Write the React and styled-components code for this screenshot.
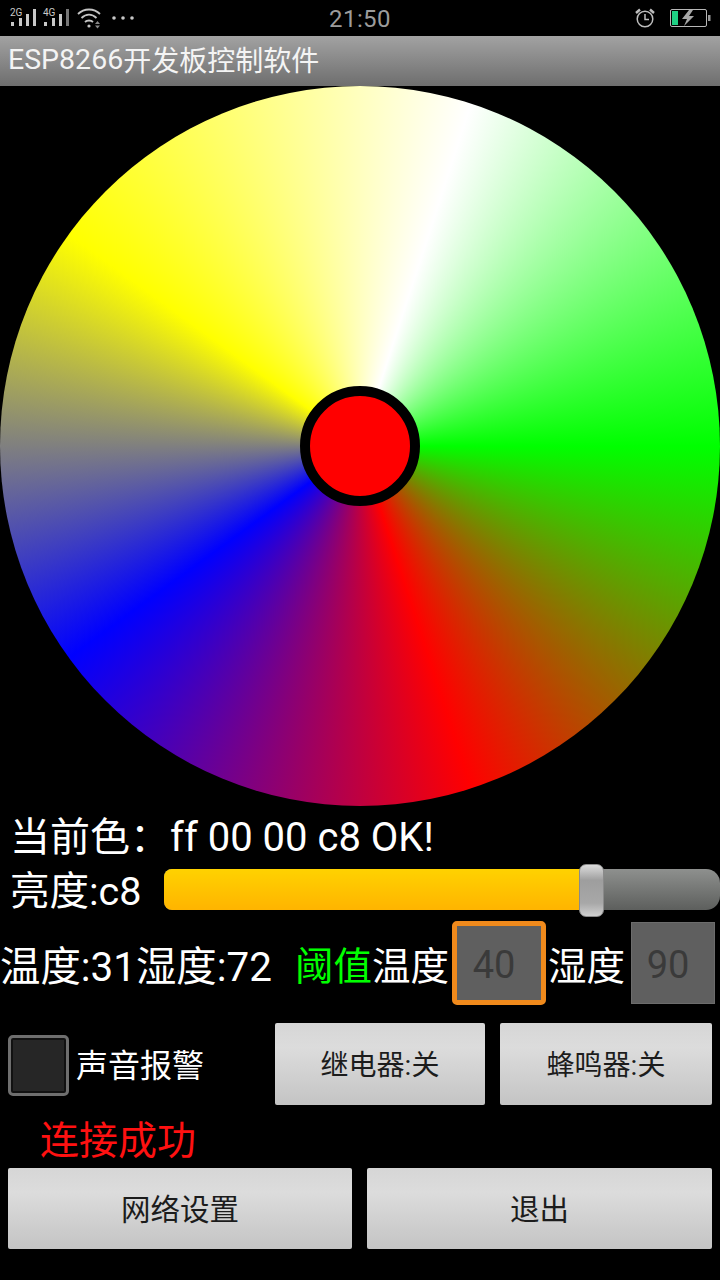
import React from "react";
import styled, { createGlobalStyle } from "styled-components";

const Global = createGlobalStyle`
  html, body { margin: 0; padding: 0; background: #000; }
  * { box-sizing: border-box; }
  body { font-family: Roboto, "Noto Sans CJK SC", sans-serif; color: #fff; }
`;

const Page = styled.div`
  width: 720px;
  height: 1280px;
  background: #000;
  overflow: hidden;
`;

const StatusBar = styled.div`
  height: 36px;
  padding: 0 9px 0 9px;
  display: grid;
  grid-template-columns: 1fr auto 1fr;
  align-items: center;
  color: #a8a8a8;
`;
const StatusLeft = styled.div`
  display: flex;
  align-items: center;
`;
const StatusRight = styled.div`
  display: flex;
  align-items: center;
  justify-content: flex-end;
`;
const Spacer = styled.span`
  width: ${(p) => p.$w}px;
  flex: none;
`;
const Clock = styled.span`
  font-size: 24px;
  padding-top: 2px;
  letter-spacing: 0.4px;
  color: #9c9c9c;
`;

const TitleBar = styled.div`
  height: 50px;
  padding: 0 0 4px 8px;
  display: flex;
  align-items: center;
  font-size: 28px;
  color: #f4f4f4;
  background: linear-gradient(#a2a2a2, #6e6e6e);
`;
const TitleLatin = styled.span`
  font-size: 28.5px;
`;

const Wheel = styled.div`
  width: 720px;
  height: 720px;
  border-radius: 50%;
  display: flex;
  align-items: center;
  justify-content: center;
  background: conic-gradient(
    from 18deg,
    #fff 0deg,
    #0f0 72deg,
    #f00 144deg,
    #00f 216deg,
    #ff0 288deg,
    #fff 360deg
  );
`;
const Picked = styled.div`
  width: 120px;
  height: 120px;
  border-radius: 50%;
  border: 10px solid #000;
  background: ${(p) => p.color};
`;

const ColorLine = styled.div`
  height: 56px;
  padding-left: 10px;
  display: flex;
  align-items: center;
  font-size: 40px;
  white-space: pre;
`;

const BrightRow = styled.div`
  height: 50px;
  padding-left: 10px;
  display: flex;
  align-items: center;
  font-size: 39.5px;
`;
const BrightLabel = styled.span`
  width: 154px;
  flex: none;
`;
const Track = styled.div`
  position: relative;
  flex: 1;
  height: 41px;
  margin-top: 4px;
  border-radius: 8px 14px 14px 8px;
  background: linear-gradient(#8e908e, #5d5f5d);
`;
const Fill = styled.div`
  height: 100%;
  border-radius: 8px 0 0 8px;
  background: linear-gradient(#ffd200, #ffb400);
`;
const Thumb = styled.div`
  position: absolute;
  top: -5px;
  width: 25px;
  height: 53px;
  margin-left: -14px;
  border-radius: 7px;
  border: 1px solid #8a8a8a;
  background: linear-gradient(#dcdcdc, #9e9e9e 30%, #a8a8a8 75%, #d0d0d0);
`;

const ThresholdRow = styled.div`
  height: 93px;
  padding-top: 9px;
  display: flex;
  align-items: center;
  font-size: 38.5px;
  white-space: nowrap;
`;
const Reading = styled.span`
  width: 295px;
  flex: none;
  font-size: 40.4px;
`;
const Accent = styled.span`
  color: #0f0;
`;
const LimitBox = styled.div`
  width: ${(p) => (p.$focused ? "94px" : "84px")};
  height: ${(p) => (p.$focused ? "84px" : "82px")};
  margin: ${(p) => (p.$focused ? "0 2px 0 3px" : "0 0 0 6px")};
  padding: 3px 10px 0 0;
  display: flex;
  align-items: center;
  justify-content: center;
  font-size: 38px;
  color: #3a3a3a;
  background: #5f5f5f;
  border: ${(p) => (p.$focused ? "5px solid #f08a1c" : "1px solid #6c6c6c")};
  border-radius: ${(p) => (p.$focused ? "5px" : "0")};
`;

const ControlRow = styled.div`
  height: 82px;
  margin-top: 18px;
  padding: 0 8px;
  display: flex;
  align-items: center;
`;
const CheckBox = styled.div`
  width: 61px;
  height: 61px;
  flex: none;
  margin-top: 2px;
  border: 3px solid #6e6e6e;
  border-radius: 5px;
  background: #262626;
  box-shadow: inset 0 0 0 2px #111;
`;
const CheckLabel = styled.span`
  width: 206px;
  padding: 0 0 3px 7px;
  flex: none;
  font-size: 32px;
`;
const Button = styled.div`
  height: ${(p) => p.$h || 82}px;
  width: ${(p) => p.$w}px;
  padding-bottom: 3px;
  display: flex;
  align-items: center;
  justify-content: center;
  font-size: ${(p) => p.$size || 29.5}px;
  color: #1c1c1c;
  border-radius: 2px;
  background: linear-gradient(#d6d6d6, #dcdcdc 30%, #c4c4c4);
`;

const Message = styled.div`
  height: 63px;
  padding-left: 40px;
  display: flex;
  align-items: center;
  font-size: 39px;
  color: #f11;
`;
const BottomRow = styled.div`
  padding: 0 8px;
  display: flex;
`;

const SignalIcon = ({ label, last }) => (
  <svg width="33" height="22" viewBox="0 0 33 22">
    <text x="1" y="9" fontSize="10" fill="#c8c8c8" fontFamily="Roboto">{label}</text>
    <g fill="#c8c8c8">
      <rect x="2" y="15" width="3" height="4" />
      <rect x="10" y="11" width="3" height="8" />
      <rect x="17" y="7" width="3" height="12" />
      <rect x="24" y="2" width="3" height="17" fill={last} />
    </g>
  </svg>
);

const Wifi = () => (
  <svg width="24" height="22" viewBox="0 0 24 22" fill="none" stroke="#c4c4c4" strokeWidth="1.8">
    <path d="M1 7 C7 1 17 1 23 7" />
    <path d="M4.5 11 C9 6.5 15 6.5 19.5 11" />
    <path d="M8 15 C10 13 14 13 16 15" />
    <circle cx="12" cy="19" r="1.6" fill="#c4c4c4" stroke="none" />
    <path d="M18 17 h5 l-2.5 -3 z M18 18.5 h5 l-2.5 3 z" fill="#888" stroke="none" />
  </svg>
);

const Dots = () => (
  <svg width="22" height="8" viewBox="0 0 22 8" fill="#c8c8c8">
    <circle cx="2" cy="4" r="1.8" />
    <circle cx="11" cy="4" r="1.8" />
    <circle cx="20" cy="4" r="1.8" />
  </svg>
);

const Alarm = () => (
  <svg width="20" height="20" viewBox="0 0 20 20" fill="none" stroke="#bdbdbd" strokeWidth="1.5">
    <circle cx="10" cy="11" r="7.8" />
    <path d="M10 6 V11.5 H14" />
    <path d="M1 5 L5 1.5 M19 5 L15 1.5" strokeWidth="2.4" />
  </svg>
);

const Battery = () => (
  <svg width="41" height="18" viewBox="0 0 41 18" fill="none">
    <rect x="0.5" y="0.5" width="36" height="17" rx="1.5" stroke="#b8b8b8" />
    <rect x="2" y="2" width="6" height="14" fill="#1fd084" />
    <path d="M19 1 L12 10 H17 L14 17 L24 7 H19 L23 1 Z" fill="#a8a8a8" />
    <rect x="38" y="6" width="2.5" height="6" fill="#9a9a9a" />
  </svg>
);

export default function App() {
  const bright = 0xc8;
  const trackWidth = 556;
  // thumb travels inside the track, 12px from each end
  const thumbX = 12 + (bright / 255) * (trackWidth - 24);

  return (
    <Page>
      <Global />
      <StatusBar>
        <StatusLeft>
          <SignalIcon label="2G" />
          <SignalIcon label="4G" last="#777" />
          <Spacer $w={2} />
          <Wifi />
          <Spacer $w={11} />
          <Dots />
        </StatusLeft>
        <Clock>21:50</Clock>
        <StatusRight>
          <Alarm />
          <Spacer $w={15} />
          <Battery />
        </StatusRight>
      </StatusBar>
      <TitleBar>
        <TitleLatin>ESP8266</TitleLatin>开发板控制软件
      </TitleBar>
      <Wheel>
        <Picked color="#f00" />
      </Wheel>
      <ColorLine>当前色：ff 00 00 c8 OK!</ColorLine>
      <BrightRow>
        <BrightLabel>亮度:c8</BrightLabel>
        <Track>
          <Fill style={{ width: thumbX - 3 }} />
          <Thumb style={{ left: thumbX }} />
        </Track>
      </BrightRow>
      <ThresholdRow>
        <Reading>温度:31湿度:72</Reading>
        <Accent>阈值</Accent>温度
        <LimitBox $focused>40</LimitBox>
        湿度
        <LimitBox>90</LimitBox>
      </ThresholdRow>
      <ControlRow>
        <CheckBox />
        <CheckLabel>声音报警</CheckLabel>
        <Button $w={210} $size={28}>继电器:关</Button>
        <Spacer $w={15} />
        <Button $w={212} $size={28}>蜂鸣器:关</Button>
      </ControlRow>
      <Message>连接成功</Message>
      <BottomRow>
        <Button $w={344} $h={81}>网络设置</Button>
        <Spacer $w={15} />
        <Button $w={345} $h={81}>退出</Button>
      </BottomRow>
    </Page>
  );
}
